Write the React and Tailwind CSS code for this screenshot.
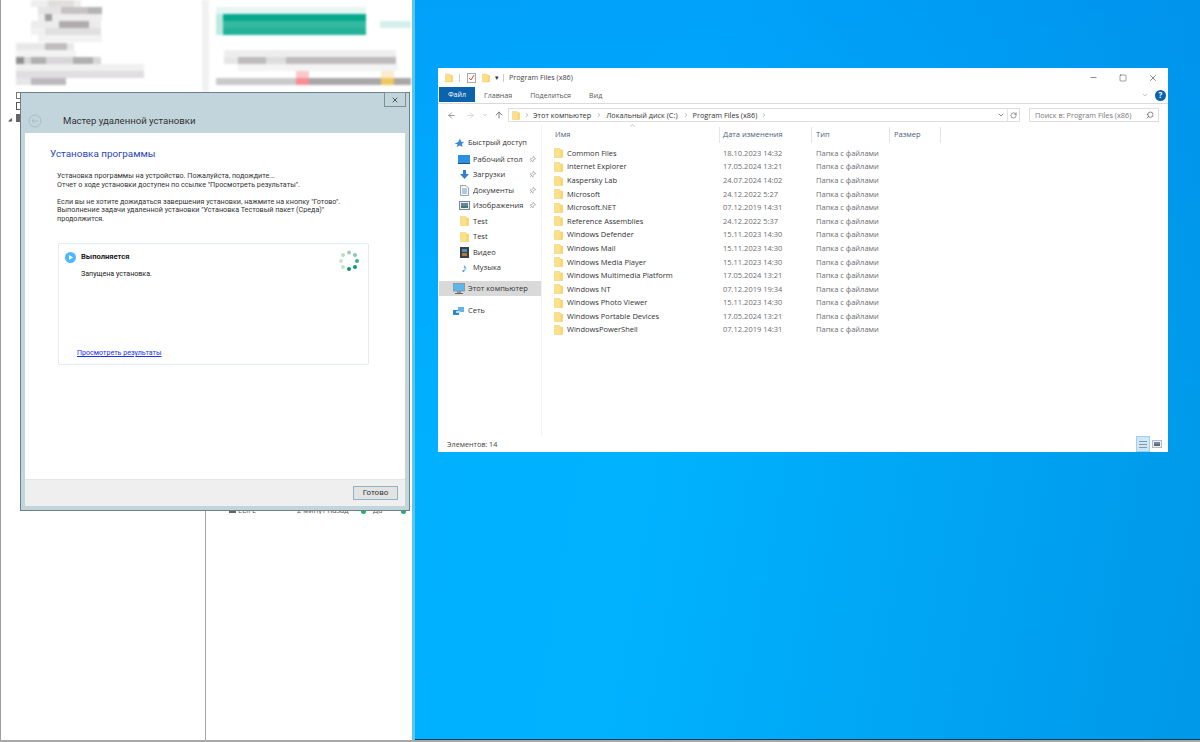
import {
  ArrowLeft,
  ArrowRight,
  ArrowUp,
  ChevronDown,
  ChevronRight,
  ChevronUp,
  Minus,
  Pin,
  RotateCw,
  Search,
  Square,
  X,
} from "lucide-react";

const files = [
  ["Common Files", "18.10.2023 14:32"],
  ["Internet Explorer", "17.05.2024 13:21"],
  ["Kaspersky Lab", "24.07.2024 14:02"],
  ["Microsoft", "24.12.2022 5:27"],
  ["Microsoft.NET", "07.12.2019 14:31"],
  ["Reference Assemblies", "24.12.2022 5:37"],
  ["Windows Defender", "15.11.2023 14:30"],
  ["Windows Mail", "15.11.2023 14:30"],
  ["Windows Media Player", "15.11.2023 14:30"],
  ["Windows Multimedia Platform", "17.05.2024 13:21"],
  ["Windows NT", "07.12.2019 19:34"],
  ["Windows Photo Viewer", "15.11.2023 14:30"],
  ["Windows Portable Devices", "17.05.2024 13:21"],
  ["WindowsPowerShell", "07.12.2019 14:31"],
];

// pixelated (censored) content of the window behind the dialog
const mosaic = [
  [30, 0, 50, 7, "#eeeeee"], [47, 0, 8, 7, "#dddddd"], [55, 0, 18, 7, "#e2dede"],
  [37, 7, 64, 7, "#e6e4e4"], [60, 7, 30, 7, "#c6c2c3"], [87, 7, 14, 7, "#b4b4b4"],
  [37, 14, 64, 7, "#eeeeee"], [44, 14, 7, 7, "#a0a0a2"],
  [30, 21, 70, 7, "#ececec"], [58, 21, 30, 7, "#b0acae"],
  [30, 28, 70, 7, "#f1f1f1"], [44, 28, 56, 7, "#e0e0e0"],
  [37, 35, 64, 7, "#f2f2f2"],
  [15, 43, 58, 7, "#e8e8e8"], [44, 43, 22, 7, "#c0bdbf"],
  [15, 50, 60, 7, "#f3f3f3"],
  [15, 57, 85, 7, "#d8d6d8"], [15, 57, 8, 7, "#909090"], [30, 57, 15, 7, "#b0b0b0"], [72, 57, 20, 7, "#b0b0b0"],
  [15, 64, 128, 7, "#f0f0f0"],
  [15, 71, 128, 7, "#e0dee0"],
  [15, 78, 50, 7, "#e6e6e6"], [30, 78, 35, 7, "#bcbabc"],
  [201, 0, 7, 92, "#f1f1f1"],
  [215, 7, 150, 7, "#e6f6f3"],
  [215, 14, 8, 21, "#bfe9e0"],
  [222, 14, 143, 7, "#05a98c"],
  [222, 21, 143, 7, "#35b9a1"],
  [222, 28, 143, 7, "#22b298"],
  [379, 21, 31, 7, "#d5f0ea"],
  [223, 50, 172, 7, "#eeeeee"],
  [237, 57, 158, 7, "#bdbbbc"], [223, 57, 14, 7, "#e6e6e6"], [265, 57, 20, 7, "#dddddd"],
  [237, 64, 160, 7, "#f4f4f4"],
  [295, 71, 13, 7, "#fbc9cb"], [380, 71, 13, 7, "#fbeccb"],
  [215, 78, 80, 7, "#cbcacb"], [295, 78, 13, 7, "#f98d93"], [308, 78, 72, 7, "#a9a7a8"],
  [380, 78, 13, 7, "#efc75f"], [393, 78, 17, 7, "#a9a7a8"],
];

const Folder = ({ className = "w-[9px] h-[10px]" }) => (
  <svg viewBox="0 0 9 10" className={className}>
    <path d="M0.5 0.5H5.5L6.5 2H8.5V9.5H0.5Z" fill="#ffe08a" stroke="#efcf74" strokeWidth="0.6" />
    <path d="M6.5 2V9.5H8.5V2Z" fill="#f8d46f" />
  </svg>
);

const NavItem = ({ icon, label, pinned, selected }) => (
  <div className={`flex items-center h-[15.5px] pl-[13px] pr-[5px] ${selected ? "bg-[#d9d9d9]" : ""}`}>
    <span className="w-[14px] flex justify-center shrink-0">{icon}</span>
    <span className="ml-[2px] flex-1 whitespace-nowrap">{label}</span>
    {pinned && <Pin size={7} className="text-[#8a8a8a] rotate-45" />}
  </div>
);

const Spinner = () => {
  const dots = [
    [10, 2.5, "#a9c9c1"], [16, 5, "#8fc4b5"], [18, 11, "#45a98d"], [16, 17, "#129a72"],
    [10, 19, "#0b9668"], [4, 17, "#c4e0c8"], [2, 11, "#cbe3cf"], [4, 5, "#bcdcc6"],
  ];
  return (
    <svg viewBox="0 0 21 21" className="w-[21px] h-[21px]">
      {dots.map(([cx, cy, fill], i) => (
        <circle key={i} cx={cx} cy={cy} r="2" fill={fill} />
      ))}
    </svg>
  );
};

const Dialog = () => (
  <div className="absolute left-[20px] top-[92px] w-[390px] h-[419px] flex flex-col border border-[#6f7f86] bg-[#c3d5dc] px-[4px] pb-[4px] font-['Roboto',sans-serif]">
    <div className="h-[40px] relative flex items-center shrink-0 pt-[16px]">
      <svg viewBox="0 0 14 14" className="w-[14px] h-[14px] ml-[3px]">
        <circle cx="7" cy="7" r="6" fill="none" stroke="#a9bcc2" />
        <path d="M10 7H4M6 5L4 7L6 9" fill="none" stroke="#a9bcc2" />
      </svg>
      <span className="ml-[21px] text-[9.6px] text-[#333]">Мастер удаленной установки</span>
      <div className="absolute -top-px -right-px w-[22px] h-[15px] border border-[#7f8f96] flex items-center justify-center">
        <X size={8} strokeWidth={3} className="text-[#555]" />
      </div>
    </div>
    <div className="flex-1 bg-white flex flex-col">
      <div className="flex-1 pl-[25px] pr-[30px] pt-[13px]">
        <h1 className="text-[9.9px] leading-[15px] text-[#2a46b8]">Установка программы</h1>
        <div className="mt-[11px] pl-[7px] text-[7.2px] leading-[8.5px] text-[#333]">
          <p>Установка программы на устройство. Пожалуйста, подождите...</p>
          <p>Отчет о ходе установки доступен по ссылке "Просмотреть результаты".</p>
          <p className="mt-[8.5px]">Если вы не хотите дожидаться завершения установки, нажмите на кнопку "Готово".</p>
          <p>Выполнение задачи удаленной установки "Установка Тестовый пакет (Среда)"</p>
          <p>продолжится.</p>
        </div>
        <div className="mt-[20px] ml-[8px] w-[311px] h-[122px] border border-[#e4ecf1] rounded-[2px] flex flex-col text-[7.1px] text-[#222]">
          <div className="flex items-start pl-[6px] pr-[8px] pt-[6px]">
            <svg viewBox="0 0 11 11" className="w-[11px] h-[11px] shrink-0 mt-[2px]">
              <circle cx="5.5" cy="5.5" r="5.5" fill="#4db8ff" />
              <path d="M4 3L8 5.5L4 8Z" fill="white" />
            </svg>
            <div className="ml-[5px] flex-1">
              <div className="font-bold text-[7.6px] leading-[12px] mt-[1px]">Выполняется</div>
              <div className="mt-[6px] leading-[10px]">Запущена установка.</div>
            </div>
            <Spinner />
          </div>
          <a className="mt-auto mb-[6px] ml-[18px] leading-[10px] text-[#1e2ff0] underline">Просмотреть результаты</a>
        </div>
      </div>
      <div className="h-[27px] bg-[#efefef] border-t border-[#e3e6e8] flex items-center justify-end pr-[7px] shrink-0">
        <button className="w-[45px] h-[14px] bg-[#e3e3e3] border border-[#8fb3c9] text-[8px] leading-none text-[#333]">
          Готово
        </button>
      </div>
    </div>
  </div>
);

const BackWindow = () => (
  <div className="absolute left-0 top-0 w-[412px] h-[740px] bg-white border-l border-[#a0a0a4] overflow-hidden">
    <svg viewBox="0 0 412 92" className="w-[412px] h-[92px] blur-[1.2px]">
      {mosaic.map(([x, y, w, h, fill], i) => (
        <rect key={i} x={x} y={y} width={w} height={h} fill={fill} />
      ))}
    </svg>
    <div className="absolute left-[204px] top-[511px] bottom-0 w-px bg-[#a5a5a5]" />
    <div className="absolute left-[15px] top-[92px] w-[5px] h-[7px] border border-[#777]" />
    <div className="absolute left-[15px] top-[102px] w-[5px] h-[8px] border border-[#555]" />
    <div className="absolute left-[15px] top-[114px] w-[5px] h-[8px] bg-[#666]" />
    <div className="absolute left-[7px] top-[117px] text-[5px] leading-none text-[#555]">◢</div>
    <div className="absolute left-[225px] top-[506px] w-[180px] flex items-center text-[7.5px] leading-[8px] h-[8px] overflow-hidden text-[#555] font-['Open_Sans',sans-serif]">
      <span className="w-[12px] h-[6px] flex justify-center"><span className="block w-[7px] h-full bg-[#666]" /></span>
      <span className="w-[59px]">ELIFE</span>
      <span className="w-[64px]">2 минут назад</span>
      <span className="w-[5px] h-[8px] bg-[#22b36b] rounded-b-full" />
      <span className="ml-[7px] w-[28px]">Да</span>
      <span className="w-[5px] h-[8px] bg-[#22b36b] rounded-b-full" />
    </div>
  </div>
);

const Explorer = () => (
  <div className="absolute left-[438px] top-[68px] w-[730px] h-[384px] bg-white flex flex-col font-['Open_Sans',sans-serif] text-[7.5px] text-[#333]">
    {/* title bar */}
    <div className="h-[19px] flex items-center pl-[7px] pr-[8px] shrink-0">
      <Folder className="w-[8px] h-[10px]" />
      <span className="ml-[6px] w-px h-[8px] bg-[#ccc]" />
      <svg viewBox="0 0 9 10" className="ml-[7px] w-[9px] h-[10px]">
        <rect x="0.5" y="0.5" width="8" height="9" fill="#fff" stroke="#aaa" />
        <path d="M2 5L4 7L7 2" fill="none" stroke="#e0503c" />
      </svg>
      <Folder className="ml-[6px] w-[8px] h-[10px]" />
      <span className="ml-[5px] text-[7px] leading-none">▾</span>
      <span className="ml-[4px] w-px h-[8px] bg-[#ccc]" />
      <span className="ml-[5px] text-[#444] text-[7.2px]">Program Files (x86)</span>
      <div className="ml-auto flex items-center gap-[21px] text-[#111] pr-[2px]">
        <Minus size={9} strokeWidth={1.3} />
        <Square size={8} strokeWidth={1.2} />
        <X size={10} strokeWidth={1.2} />
      </div>
    </div>
    {/* ribbon tabs */}
    <div className="h-[17px] flex items-center border-b border-[#dadada] shrink-0 pl-[1px] text-[7.1px] text-[#555]">
      <span className="w-[36px] h-[15px] mt-[-1px] bg-[#0b62ad] text-white flex items-center justify-center">Файл</span>
      <span className="ml-[9px]">Главная</span>
      <span className="ml-[18px]">Поделиться</span>
      <span className="ml-[18px]">Вид</span>
      <ChevronDown size={8} className="ml-auto text-[#aaa]" />
      <span className="ml-[6px] mr-[2px] w-[11px] h-[11px] rounded-full bg-[#0b62ad] text-white text-[8px] font-bold flex items-center justify-center">?</span>
    </div>
    {/* address bar */}
    <div className="h-[21px] flex items-center pl-[9px] pr-[9px] shrink-0 pt-[1px]">
      <ArrowLeft size={9} className="text-[#777]" />
      <ArrowRight size={9} className="ml-[10px] text-[#ccc]" />
      <ChevronDown size={6} className="ml-[7px] text-[#999]" />
      <ArrowUp size={10} className="ml-[6px] text-[#666]" />
      <div className="ml-[4px] w-[512px] h-[14px] border border-[#dedede] flex items-center pl-[3px] text-[#333] text-[7.3px] whitespace-nowrap">
        <Folder className="w-[8px] h-[9px]" />
        <ChevronRight size={6} className="ml-[4px] text-[#777]" />
        <span className="ml-[3px]">Этот компьютер</span>
        <ChevronRight size={6} className="ml-[5px] text-[#777]" />
        <span className="ml-[4px]">Локальный диск (C:)</span>
        <ChevronRight size={6} className="ml-[5px] text-[#777]" />
        <span className="ml-[4px]">Program Files (x86)</span>
        <ChevronRight size={6} className="ml-[4px] text-[#777]" />
        <ChevronDown size={8} className="ml-auto mr-[1px] text-[#555]" />
        <span className="w-px h-full bg-[#e5e5e5] ml-[1px]" />
        <RotateCw size={7} className="mx-[2px] text-[#555]" />
      </div>
      <div className="ml-auto w-[130px] h-[14px] border border-[#dedede] flex items-center pl-[5px] pr-[4px] text-[#777]">
        <span className="flex-1 whitespace-nowrap text-[7.3px]">Поиск в: Program Files (x86)</span>
        <Search size={8} className="text-[#555] -scale-x-100" />
      </div>
    </div>
    {/* body */}
    <div className="flex-1 flex min-h-0">
      <nav className="w-[104px] shrink-0 border-r border-[#f3f3f3] pt-[6px] pl-[1px] text-[#333]">
        <div className="pt-[4px] mb-[1px]">
          <NavItem icon={<StarIcon />} label="Быстрый доступ" />
        </div>
        <div className="pl-[5px]">
          <NavItem pinned label="Рабочий стол" icon={<DesktopIcon />} />
          <NavItem pinned label="Загрузки" icon={<DownloadIcon />} />
          <NavItem pinned label="Документы" icon={<DocIcon />} />
          <NavItem pinned label="Изображения" icon={<PictureIcon />} />
          <NavItem label="Test" icon={<Folder />} />
          <NavItem label="Test" icon={<Folder />} />
          <NavItem label="Видео" icon={<VideoIcon />} />
          <NavItem label="Музыка" icon={<span className="text-[#1d8ae6] text-[12px] leading-none">♪</span>} />
        </div>
        <div className="mt-[5px]">
          <NavItem selected label="Этот компьютер" icon={<ComputerIcon />} />
        </div>
        <div className="mt-[7px]">
          <NavItem label="Сеть" icon={<NetworkIcon />} />
        </div>
      </nav>
      <main className="flex-1 min-w-0 pl-[12px]">
        <div className="relative h-[19px] flex items-center text-[#4c607a]">
          <span className="w-[165px] pl-[1px]">Имя</span>
          <span className="w-[92px] pl-[3px] h-[16px] flex items-center border-l border-[#e5e5e5]">Дата изменения</span>
          <span className="w-[78px] pl-[4px] h-[16px] flex items-center border-l border-[#e5e5e5]">Тип</span>
          <span className="w-[52px] pl-[4px] h-[16px] flex items-center border-l border-r border-[#e5e5e5]">Размер</span>
          <ChevronUp size={7} className="absolute left-[75px] -top-[3px] text-[#999]" />
        </div>
        <ul className="pt-[2.6px]">
          {files.map(([name, date]) => (
            <li key={name} className="h-[13.6px] flex items-center">
              <span className="w-[166px] flex items-center">
                <Folder />
                <span className="ml-[4px] whitespace-nowrap">{name}</span>
              </span>
              <span className="w-[93px] pl-[3px] text-[#6d6d6d]">{date}</span>
              <span className="pl-[3px] text-[#6d6d6d] whitespace-nowrap">Папка с файлами</span>
            </li>
          ))}
        </ul>
      </main>
    </div>
    {/* status bar */}
    <div className="h-[16px] flex items-center pl-[9px] pr-[6px] shrink-0 text-[#444] text-[7.2px]">
      <span>Элементов: 14</span>
      <div className="ml-auto flex items-center">
        <div className="w-[14px] h-[16px] bg-[#cce8f6] border border-[#9bd3f0] flex flex-col justify-center gap-[2px] px-[2px]">
          <span className="block h-px bg-[#8a9aa5]" />
          <span className="block h-px bg-[#8a9aa5]" />
          <span className="block h-px bg-[#8a9aa5]" />
        </div>
        <svg viewBox="0 0 10 8" className="ml-[2px] w-[10px] h-[8px]">
          <rect x="0.5" y="0.5" width="9" height="7" fill="#eee" stroke="#bbb" />
          <rect x="2" y="2" width="6" height="2" fill="#5f8fc0" />
          <rect x="2" y="4" width="6" height="2" fill="#56706a" />
        </svg>
      </div>
    </div>
  </div>
);

function StarIcon() {
  return (
    <svg viewBox="0 0 11 11" className="w-[10px] h-[10px]">
      <path d="M6.5 0.5L8 4L11 4.5L8.6 6.6L9.3 10L6.3 8.2L3 10L3.8 6.6H0.5L4.8 4Z" fill="#3b86dc" />
    </svg>
  );
}

function DesktopIcon() {
  return (
    <svg viewBox="0 0 12 9" className="w-[12px] h-[9px]">
      <rect width="12" height="8" fill="#2d8fe0" />
      <rect y="8" width="12" height="1" fill="#17507f" />
    </svg>
  );
}

function DownloadIcon() {
  return (
    <svg viewBox="0 0 11 11" className="w-[11px] h-[11px]">
      <path d="M4 1H7V5H10L5.5 10L1 5H4Z" fill="#2f7fd6" />
    </svg>
  );
}

function DocIcon() {
  return (
    <svg viewBox="0 0 9 11" className="w-[9px] h-[11px]">
      <path d="M0.5 0.5H6L8.5 3V10.5H0.5Z" fill="#f4f7fa" stroke="#9aa5ad" />
      <path d="M2 4H7M2 6H7M2 8H7" stroke="#6f9cc4" />
    </svg>
  );
}

function PictureIcon() {
  return (
    <svg viewBox="0 0 11 9" className="w-[11px] h-[9px]">
      <rect x="0.5" y="0.5" width="10" height="8" fill="#e9eef2" stroke="#7c8790" />
      <rect x="2" y="2" width="7" height="3" fill="#5f86ad" />
      <rect x="2" y="5" width="7" height="2" fill="#56706a" />
    </svg>
  );
}

function VideoIcon() {
  return (
    <svg viewBox="0 0 9 11" className="w-[9px] h-[11px]">
      <rect width="9" height="11" fill="#3a4048" />
      <rect x="2" y="2" width="5" height="3" fill="#4f8fc0" />
      <rect x="2" y="6" width="5" height="3" fill="#b5783c" />
    </svg>
  );
}

function ComputerIcon() {
  return (
    <svg viewBox="0 0 12 11" className="w-[12px] h-[11px]">
      <rect x="0.5" y="0.5" width="11" height="7.5" fill="#5ab8ee" stroke="#8a9aa5" />
      <rect x="4" y="8" width="4" height="2" fill="#8a9aa5" />
      <rect x="2" y="10" width="8" height="1" fill="#666" />
    </svg>
  );
}

function NetworkIcon() {
  return (
    <svg viewBox="0 0 12 10" className="w-[12px] h-[10px]">
      <rect x="0" y="4" width="6" height="5" fill="#2f86cf" />
      <rect x="5" y="1" width="6" height="5" fill="#64b4e8" />
      <rect x="3" y="5" width="4" height="2" fill="#bcdcf0" />
    </svg>
  );
}

export default function App() {
  return (
    <div className="relative w-[1200px] h-[742px] overflow-hidden bg-[linear-gradient(180deg,rgba(0,120,235,0.28)_0%,rgba(0,120,235,0.12)_30%,rgba(0,120,235,0)_62%),linear-gradient(100deg,#00aeff_0%,#00b2ff_55%,#0098e8_100%)]">
      <BackWindow />
      <div className="absolute left-[412px] top-0 w-[3px] h-[740px] bg-[#5cc6ef]" />
      <div className="absolute left-[415px] right-0 top-[739px] h-px bg-[#0a3f60]" />
      <div className="absolute left-0 right-0 top-[740px] h-[2px] bg-[#a8a8a8]" />
      <Dialog />
      <Explorer />
    </div>
  );
}
